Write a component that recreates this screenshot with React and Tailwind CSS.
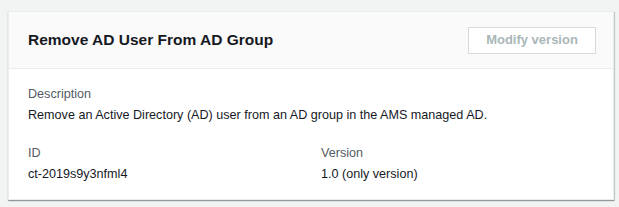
export default function App() {
  return (
    <div className="min-h-screen bg-[#f2f3f3] pt-[11px] pl-[8px] pr-[5px]" style={{ fontFamily: '"Liberation Sans", Arial, sans-serif' }}>
      <div className="bg-white border border-[#eaeded] shadow-[0_1px_1px_0_rgba(0,28,36,0.3),1px_1px_1px_0_rgba(0,28,36,0.15)]">
        <div className="bg-[#fafafa] border-b border-[#eaeded] h-[57px] flex items-center justify-between pl-[19px] pr-[17px]">
          <h2 className="text-[15.5px] font-bold text-[#16191f]">Remove AD User From AD Group</h2>
          <button disabled className="w-[128px] h-[27px] border border-[#d5dbdb] bg-white text-[#aab7b8] text-[13px] font-bold">
            Modify version
          </button>
        </div>
        <div className="pl-[19px] pr-5 pt-[15px] pb-[14px] text-[12.6px] leading-[21px] text-[#16191f]">
          <div className="text-[#545b64]">Description</div>
          <div>Remove an Active Directory (AD) user from an AD group in the AMS managed AD.</div>
          <div className="grid grid-cols-[293px_1fr] mt-[17px]">
            <div>
              <div className="text-[#545b64]">ID</div>
              <div>ct-2019s9y3nfml4</div>
            </div>
            <div>
              <div className="text-[#545b64]">Version</div>
              <div>1.0 (only version)</div>
            </div>
          </div>
        </div>
      </div>
    </div>
  );
}
